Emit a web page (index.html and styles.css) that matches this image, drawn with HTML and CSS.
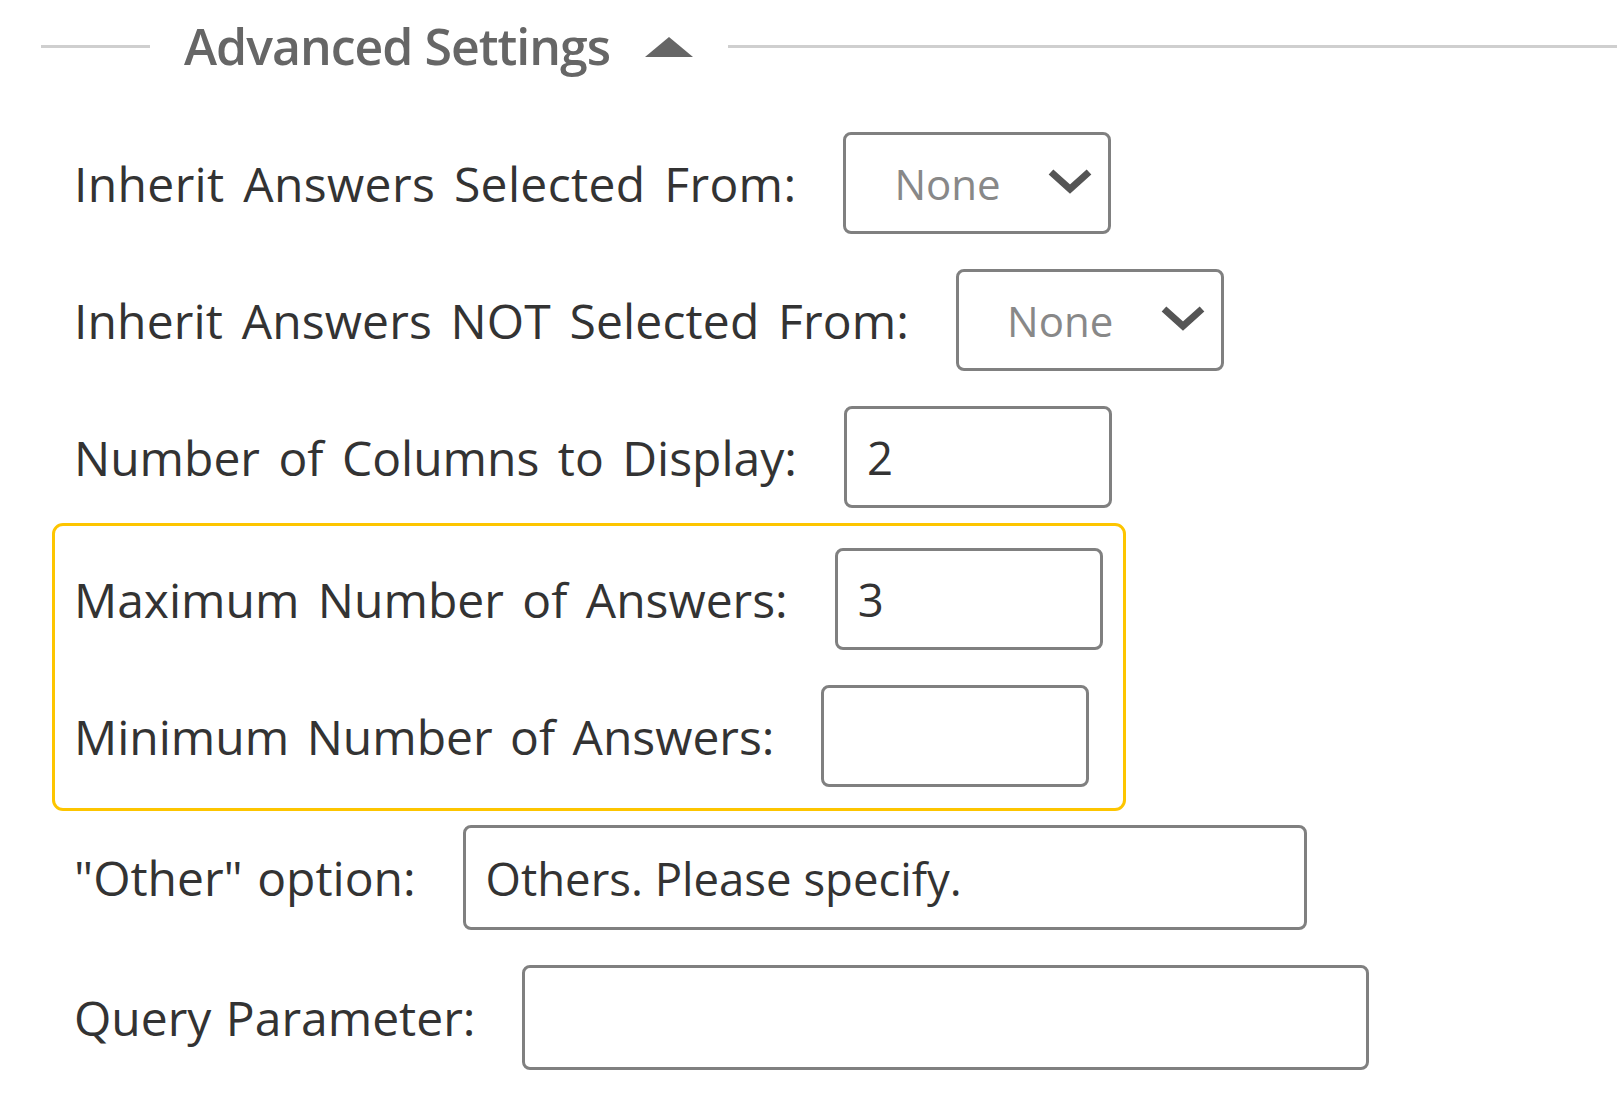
FILE: index.html
```html
<!DOCTYPE html>
<html>
<head>
<meta charset="utf-8">
<link rel="stylesheet" href="styles.css">
</head>
<body>
<div class="panel">
  <div class="legend">
    <span class="rule rule-left"></span>
    <span class="legend-title">Advanced Settings</span>
    <svg class="caret" width="50" height="22" viewBox="0 0 50 22"><polygon points="25,1 49,21 1,21" fill="#666"/></svg>
    <span class="rule rule-right"></span>
  </div>
  <div class="form">
    <div class="row">
      <label class="label label-loose">Inherit Answers Selected From:</label>
      <div class="select">
        <span class="select-value">None</span>
        <svg class="chev" width="46" height="28" viewBox="0 0 46 28"><polyline points="4,5 23,22 42,5" fill="none" stroke="#555" stroke-width="7" stroke-linejoin="miter"/></svg>
      </div>
    </div>
    <div class="row">
      <label class="label label-semi">Inherit Answers NOT Selected From:</label>
      <div class="select">
        <span class="select-value">None</span>
        <svg class="chev" width="46" height="28" viewBox="0 0 46 28"><polyline points="4,5 23,22 42,5" fill="none" stroke="#555" stroke-width="7" stroke-linejoin="miter"/></svg>
      </div>
    </div>
    <div class="row">
      <label class="label">Number of Columns to Display:</label>
      <div class="input">2</div>
    </div>
    <div class="highlight">
      <div class="row">
        <label class="label">Maximum Number of Answers:</label>
        <div class="input">3</div>
      </div>
      <div class="row">
        <label class="label label-tight">Minimum Number of Answers:</label>
        <div class="input"></div>
      </div>
    </div>
    <div class="row">
      <label class="label label-short">"Other" option:</label>
      <div class="input input-wide">Others. Please specify.</div>
    </div>
    <div class="row">
      <label class="label label-short">Query Parameter:</label>
      <div class="input input-wider"></div>
    </div>
  </div>
</div>
</body>
</html>
```
FILE: styles.css
```css
html, body {
  margin: 0;
  padding: 0;
  background: #fff;
}
body {
  font-family: "Open Sans", "Noto Sans", sans-serif;
  color: #333;
}
.panel {
  width: 1617px;
}
.legend {
  display: flex;
  align-items: center;
  height: 92px;
  padding-left: 41px;
}
.rule {
  height: 3px;
  background: #cfcfcf;
}
.rule-left {
  width: 109px;
}
.rule-right {
  flex: 1;
}
.legend-title {
  margin-left: 34px;
  font-size: 50px;
  font-weight: 600;
  color: #666;
  letter-spacing: -1px;
  white-space: nowrap;
}
.caret {
  margin-left: 34px;
  margin-right: 34px;
  margin-top: 2px;
}
.form {
  padding-top: 40px;
  padding-left: 74px;
}
.row {
  display: flex;
  align-items: center;
  gap: 47px;
  margin-bottom: 35px;
}
.label {
  font-size: 48px;
  word-spacing: 6px;
  color: #333;
  white-space: nowrap;
}
.label-loose {
  letter-spacing: 0.35px;
}
.label-semi {
  letter-spacing: 0.14px;
}
.label-tight {
  word-spacing: 5px;
}
.label-short {
  word-spacing: 2px;
}
.select, .input {
  box-sizing: border-box;
  height: 102px;
  width: 268px;
  border: 3px solid #808080;
  border-radius: 8px;
  background: #fff;
  display: flex;
  align-items: center;
}
.select {
  padding-left: 48px;
  padding-right: 15px;
  justify-content: space-between;
}
.select-value {
  font-size: 42px;
  color: #888;
}
.chev {
  margin-top: -4px;
}
.input {
  padding-left: 20px;
  font-size: 45.5px;
  color: #333;
}
.input-wide {
  width: 844px;
  height: 105px;
}
.input-wider {
  width: 847px;
  height: 105px;
}
.highlight {
  box-sizing: border-box;
  margin-left: -22px;
  width: 1074px;
  border: 3px solid #fdc500;
  border-radius: 11px;
  padding: 22px 0 21px 19px;
  margin-top: -20px;
  margin-bottom: 14px;
}
.highlight .row:last-child {
  margin-bottom: 0;
}
```
